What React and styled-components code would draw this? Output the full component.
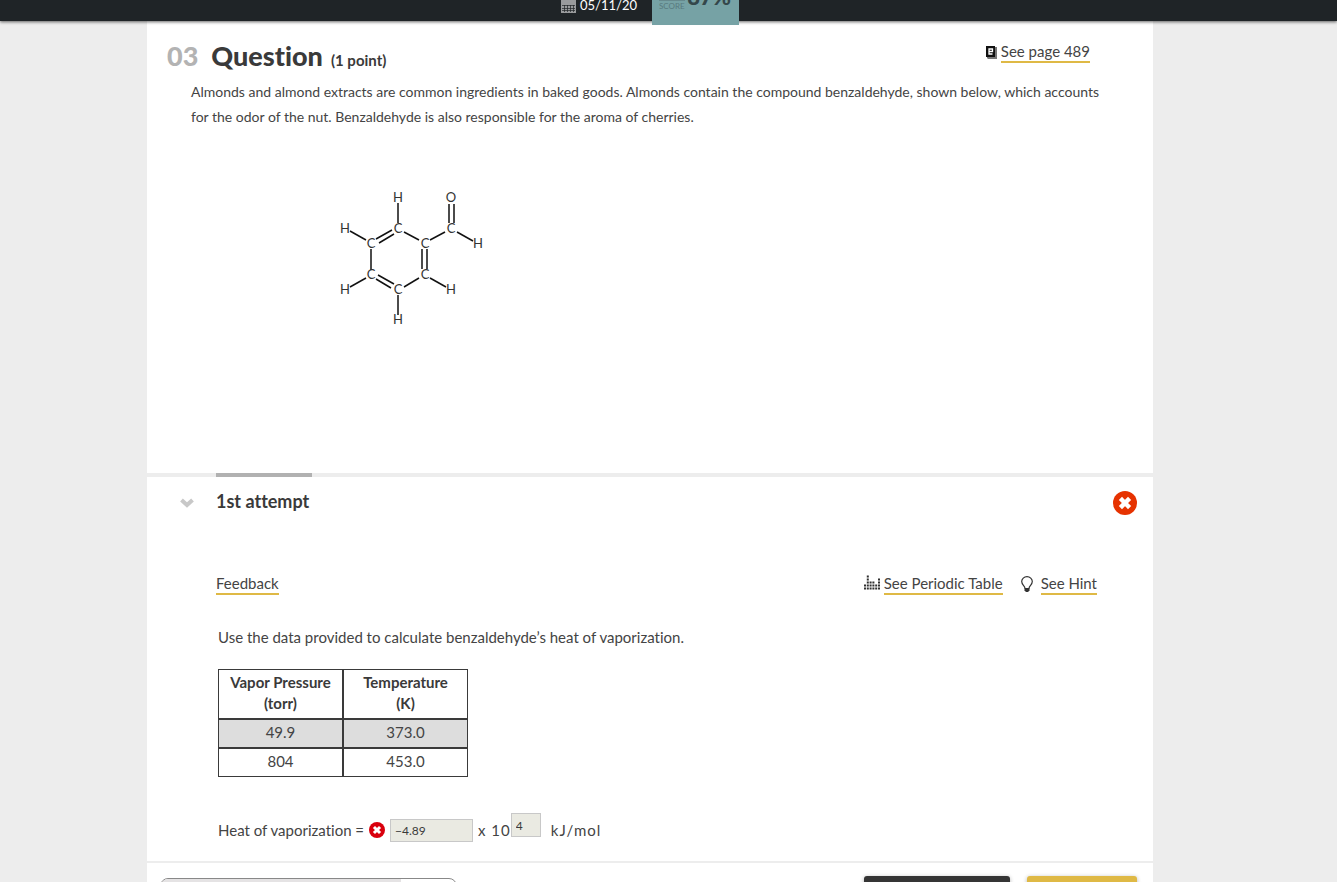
import React from "react";
import styled, { createGlobalStyle } from "styled-components";

const GlobalStyle = createGlobalStyle`
  * {
    box-sizing: border-box;
  }
  body {
    margin: 0;
    background: #ededed;
    color: #444;
    font-family: Lato, "Liberation Sans", sans-serif;
    font-size: 15px;
    font-variant-ligatures: none;
    -webkit-font-smoothing: antialiased;
  }
`;

const atoms = [
  ["H", 78, 18],
  ["O", 131, 18],
  ["C", 78, 49],
  ["C", 131, 49],
  ["H", 25, 49],
  ["C", 51, 64],
  ["C", 105, 64],
  ["H", 158, 64],
  ["C", 51, 95],
  ["C", 105, 95],
  ["H", 25, 110],
  ["C", 78, 110],
  ["H", 131, 110],
  ["H", 78, 140],
];

const bonds = [
  "M78 23V43",
  "M129 24V43M134 24V43",
  "M30 51L46 60",
  "M56 59L72 50M59 63L74 54",
  "M84 52L99 60",
  "M110 60L125 52",
  "M137 52L153 61",
  "M51 69V90",
  "M102 69V89M107 69V89",
  "M46 98L30 107",
  "M58 95L74 104M56 99L71 108",
  "M84 107L99 98",
  "M110 98L126 107",
  "M78 115V135",
];

const rows = [
  ["49.9", "373.0"],
  ["804", "453.0"],
];

const Molecule = () => (
  <MoleculeSvg viewBox="0 0 180 155" role="img" aria-label="Benzaldehyde">
    {bonds.map((d) => (
      <path key={d} d={d} />
    ))}
    {atoms.map(([label, x, y]) => (
      <text key={`${x}-${y}`} x={x} y={y + 4}>
        {label}
      </text>
    ))}
  </MoleculeSvg>
);

const CalendarIcon = () => (
  <svg width="15" height="15" viewBox="0 0 15 15" aria-hidden="true">
    <path fill="#999b9d" d="M0 0h15v15H0z" />
    <path
      stroke="#1f2427"
      strokeWidth="0.7"
      d="M1 7.5h13M1 10.5h13M1 12.5h13M3.5 7v7M6.5 7v7M9.5 7v7M12.5 7v7"
    />
  </svg>
);

const BookIcon = () => (
  <svg width="11" height="14" viewBox="0 0 11 14" aria-hidden="true">
    <path fill="#777" d="M1 2h10v12H2L1 13z" />
    <path fill="#111" d="M0 1h9v11H0z" />
    <path fill="none" stroke="#fff" strokeWidth="1.3" d="M6.5 9H3V4h3.5v2.5H3" />
  </svg>
);

// columns of small squares, like the outline of the periodic table
const PeriodicIcon = () => (
  <svg width="16" height="18" viewBox="0 0 16 18" aria-hidden="true">
    <path
      stroke="#2f2f2f"
      strokeWidth="2"
      strokeDasharray="2 0.8"
      d="M0 13.5h16M0 10.5h16M2.800 7.5h8M14 7.5h2M2.800 4.5h2M14 4.500h2M2.800 1.500h2"
    />
  </svg>
);

const BulbIcon = () => (
  <svg width="12" height="16" viewBox="0 0 12 16" aria-hidden="true">
    <path
      fill="none"
      stroke="#333"
      strokeWidth="1.2"
      d="M4 12.5C4 9.5 .7 9 .7 5.600a5.300 5 0 0 1 10.600 0C11.300 9 8 9.500 8 12.500z"
    />
    <path fill="#333" d="M3.500 12.500h5v2L7 16H5l-1.500-1.500z" />
  </svg>
);

const Chevron = () => (
  <svg width="14" height="10" viewBox="0 0 14 10" aria-hidden="true">
    <path fill="none" stroke="#c8c8c8" strokeWidth="4" d="M1.5 2L7 7l5.5-5" />
  </svg>
);

const WrongIcon = ({ size, color }) => (
  <svg width={size} height={size} viewBox="0 0 24 24" role="img" aria-label="Incorrect">
    <circle cx="12" cy="12" r="12" fill={color} />
    <path
      stroke="#fff"
      strokeWidth="4.5"
      strokeLinecap="square"
      d="M9 9l6 6M15 9l-6 6"
    />
  </svg>
);

export default function App() {
  return (
    <Page>
      <GlobalStyle />
      <TopBar>
        <DateItem>
          <CalendarIcon />
          05/11/20
        </DateItem>
        <Score>
          <ScoreLabel>SCORE</ScoreLabel>
          <ScoreValue>87%</ScoreValue>
        </Score>
      </TopBar>
      <Sheet>
        <Question>
          <QuestionHead>
            <Title>
              <Num>03</Num>
              Question
              <Points>(1 point)</Points>
            </Title>
            <IconLink>
              <BookIcon />
              <Link href="#page-489">See page 489</Link>
            </IconLink>
          </QuestionHead>
          <Intro>
            Almonds and almond extracts are common ingredients in baked goods.
            Almonds contain the compound benzaldehyde, shown below, which
            accounts for the odor of the nut. Benzaldehyde is also responsible
            for the aroma of cherries.
          </Intro>
          <Molecule />
        </Question>
        <TabTrack>
          <TabMark />
        </TabTrack>
        <AttemptHead>
          <Toggle aria-label="Collapse attempt">
            <Chevron />
          </Toggle>
          <AttemptTitle>1st attempt</AttemptTitle>
          <WrongIcon size={24} color="#e63200" />
        </AttemptHead>
        <Tools>
          <Link href="#feedback">Feedback</Link>
          <ToolGroup>
            <IconLink>
              <PeriodicIcon />
              <Link href="#periodic">See Periodic Table</Link>
            </IconLink>
            <IconLink $wide>
              <BulbIcon />
              <Link href="#hint">See Hint</Link>
            </IconLink>
          </ToolGroup>
        </Tools>
        <Problem>
          <Prompt>
            Use the data provided to calculate benzaldehyde’s heat of
            vaporization.
          </Prompt>
          <DataTable>
            <thead>
              <tr>
                <th>
                  Vapor Pressure
                  <br />
                  (torr)
                </th>
                <th>
                  Temperature
                  <br />
                  (K)
                </th>
              </tr>
            </thead>
            <tbody>
              {rows.map(([pressure, temp]) => (
                <tr key={pressure}>
                  <td>{pressure}</td>
                  <td>{temp}</td>
                </tr>
              ))}
            </tbody>
          </DataTable>
          <Answer>
            <label htmlFor="heat">Heat of vaporization =</label>
            <WrongIcon size={16} color="#d9000d" />
            <AnswerInput id="heat" defaultValue="−4.89" />
            <Unit as="label" htmlFor="power">
              x 10
            </Unit>
            <PowerInput id="power" defaultValue="4" />
            <Unit>kJ/mol</Unit>
          </Answer>
        </Problem>
        <Footer>
          <Progress>
            <ProgressFill />
          </Progress>
          <Action $dark aria-label="View solution" />
          <Action aria-label="Next" />
        </Footer>
      </Sheet>
    </Page>
  );
}

const Page = styled.div`
  height: 100vh;
  overflow: hidden;
`;
const TopBar = styled.header`
  position: relative;
  height: 21px;
  padding-right: 37px;
  display: flex;
  justify-content: center;
  align-items: flex-end;
  gap: 15px;
  background: #1f2427;
  box-shadow: 0 1px 3px rgba(0, 0, 0, 0.6);
`;
const DateItem = styled.div`
  display: flex;
  align-items: flex-end;
  gap: 4px;
  height: 22px;
  padding-bottom: 8px;
  font-size: 13px;
  line-height: 16px;
  color: #fff;
`;
const Score = styled.div`
  width: 87px;
  height: 32px;
  margin-bottom: -4px;
  padding: 0 8px 14px 7px;
  display: flex;
  align-items: flex-end;
  justify-content: space-between;
  background: #76a2a5;
  color: #34474b;
`;
const ScoreLabel = styled.span`
  border-top: 2px solid #66898d;
  font-size: 8px;
  line-height: 10px;
  color: #587a7e;
`;
const ScoreValue = styled.span`
  font-size: 22px;
  line-height: 28px;
  font-weight: 900;
`;
const Sheet = styled.main`
  width: calc(100% - 331px);
  margin-left: 147px;
  background: #fff;
`;
const Question = styled.section`
  height: 452px;
  padding: 20px 20px 0;
`;
const QuestionHead = styled.div`
  display: flex;
  justify-content: space-between;
  align-items: flex-start;
  padding-right: 43px;
`;
const Title = styled.h1`
  margin: 0;
  font-size: 27px;
  line-height: 30px;
  font-weight: 900;
  color: #3a3a3a;
`;
const Num = styled.span`
  margin-right: 13px;
  color: #b3b3b3;
`;
const Points = styled.span`
  margin-left: 8px;
  font-size: 15px;
  font-weight: 700;
`;
const IconLink = styled.span`
  display: flex;
  align-items: center;
  gap: ${(p) => (p.$wide ? "8px" : "4px")};
`;
const Link = styled.a`
  border-bottom: 2px solid #dfb945;
  font-size: 15px;
  line-height: 20px;
  color: #444;
  text-decoration: none;
`;
const Intro = styled.p`
  margin: 4px 24px 0;
  font-size: 14px;
  line-height: 25px;
`;
const MoleculeSvg = styled.svg`
  display: block;
  width: 180px;
  height: 155px;
  margin: 51px 0 0 153px;
  fill: none;
  stroke: #111;
  stroke-width: 1.5;

  text {
    fill: #333;
    stroke: none;
    font-size: 13px;
    text-anchor: middle;
  }
`;
const TabTrack = styled.div`
  height: 4px;
  padding-left: 69px;
  background: #ededed;
`;
const TabMark = styled.div`
  width: 96px;
  height: 4px;
  background: #b1b1b1;
`;
const AttemptHead = styled.div`
  display: flex;
  align-items: center;
  padding: 14px 16px 0 33px;
`;
const Toggle = styled.button`
  display: flex;
  width: 36px;
  padding: 0;
  border: 0;
  background: none;
`;
const AttemptTitle = styled.h2`
  flex: 1;
  margin: 0;
  padding-bottom: 4px;
  font-size: 18px;
  line-height: 20px;
  font-weight: 700;
  color: #3a3a3a;
`;
const Tools = styled.div`
  display: flex;
  justify-content: space-between;
  padding: 58px 56px 0 69px;
`;
const ToolGroup = styled.div`
  display: flex;
  gap: 18px;
`;
const Problem = styled.section`
  padding: 31px 71px 16px;
  border-bottom: 2px solid #ededed;
`;
const Prompt = styled.p`
  margin: 0 0 21px;
  line-height: 22px;
`;
const DataTable = styled.table`
  width: 250px;
  table-layout: fixed;
  border-collapse: separate;
  border-spacing: 0;
  text-align: center;

  th,
  td {
    padding: 2px 0 4px;
    border: 1px solid #3a3a3a;
    line-height: 21px;
  }
  th {
    color: #3a3a3a;
  }
  tbody tr:first-child {
    background: #ddd;
  }
`;
const Answer = styled.div`
  display: flex;
  align-items: center;
  margin-top: 38px;
  height: 30px;
  gap: 5px;
`;
const AnswerInput = styled.input`
  width: 83px;
  height: 23px;
  padding: 0 4px;
  border: 1px solid #c8c8c8;
  background: #eaeae2;
  color: #3a3a3a;
  font-family: inherit;
  font-size: 12px;
`;
const PowerInput = styled(AnswerInput)`
  width: 30px;
  height: 24px;
  margin: 0 5px 10px -5px;
`;
const Unit = styled.span`
  letter-spacing: 1px;
`;
const Footer = styled.footer`
  display: flex;
  padding: 13px 16px 0 13px;
`;
const Progress = styled.div`
  width: 297px;
  height: 30px;
  margin: 2px auto 0 0;
  border: 1px solid #888;
  border-radius: 8px;
  overflow: hidden;
`;
const ProgressFill = styled.div`
  width: 240px;
  height: 100%;
  background: #e5e3e4;
`;
const Action = styled.button`
  width: ${(p) => (p.$dark ? "146px" : "110px")};
  height: 36px;
  margin-left: 17px;
  border: 0;
  border-radius: 3px;
  background: ${(p) => (p.$dark ? "#353535" : "#dfb945")};
  box-shadow: 0 1px 4px rgba(0, 0, 0, 0.3);
`;
